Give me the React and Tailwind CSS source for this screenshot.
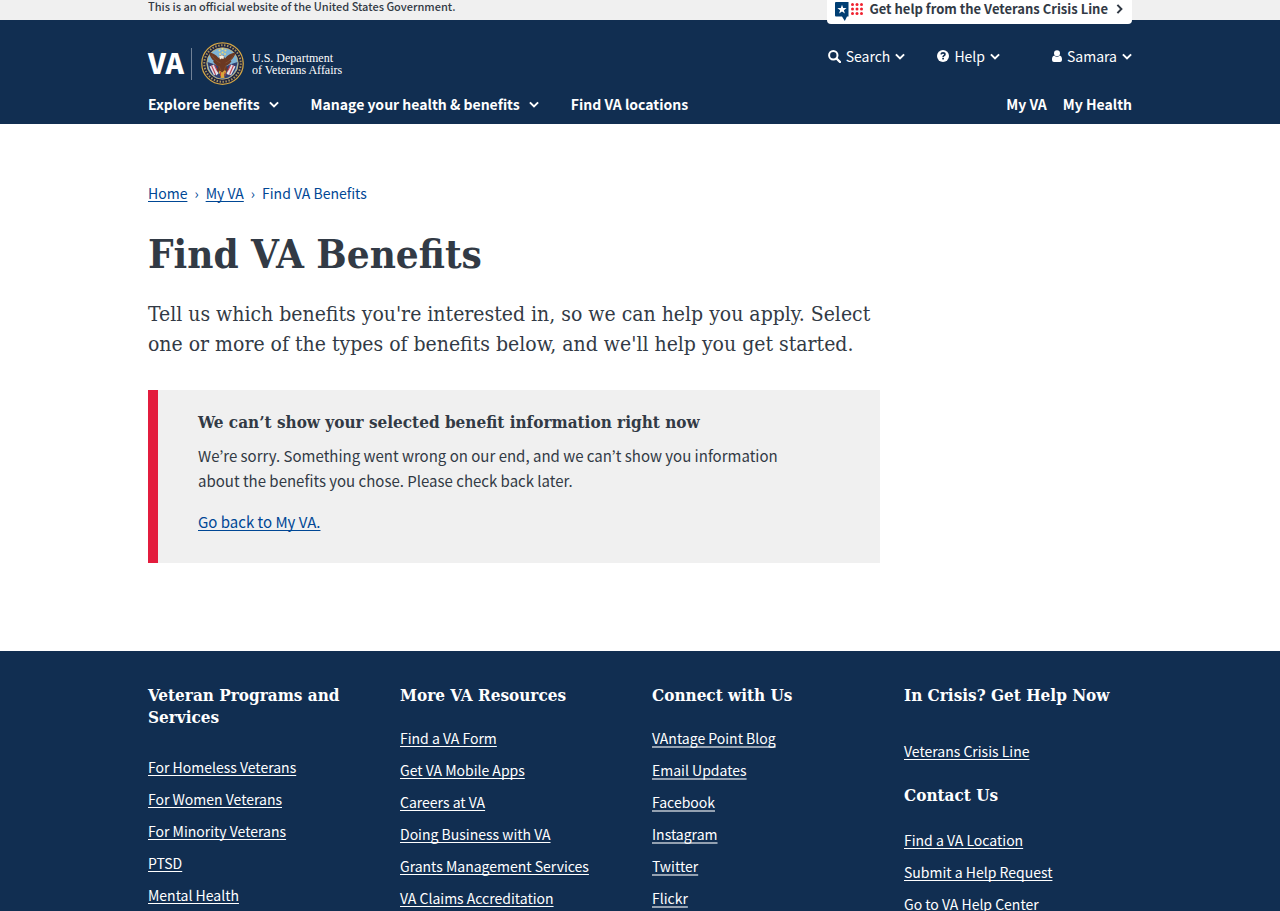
import React from 'react';

const sans = "font-['Noto_Sans_CJK_KR','Open_Sans',sans-serif]";
const slab = "font-['DejaVu_Serif_Condensed','DejaVu_Serif',serif]";

function Chevron({ className = '' }) {
  return (
    <svg className={`h-2.5 w-2.5 ${className}`} viewBox="0 0 10 10" fill="none" stroke="currentColor" strokeWidth="2" aria-hidden="true">
      <path d="M0.9 3.4 5 7.4 9.1 3.4" />
    </svg>
  );
}

function SearchIcon() {
  return (
    <svg className="h-[13px] w-[13px]" viewBox="0 0 13 13" fill="none" stroke="currentColor" aria-hidden="true">
      <circle cx="5.3" cy="5.3" r="4.2" strokeWidth="2" />
      <path d="M8.5 8.5 12 12" strokeWidth="2.4" strokeLinecap="round" />
    </svg>
  );
}

function HelpIcon() {
  return (
    <svg className="h-3 w-3" viewBox="0 0 12 12" aria-hidden="true">
      <circle cx="6" cy="6" r="6" fill="currentColor" />
      <path d="M4.1 4.4C4.3 3.3 5 2.9 6 2.9c1.1 0 1.9.6 1.9 1.5C7.9 5.7 6.1 5.6 6.1 7" fill="none" stroke="#112e51" strokeWidth="1.7" />
      <rect x="5.2" y="7.8" width="1.8" height="1.6" fill="#112e51" />
    </svg>
  );
}

function UserIcon() {
  return (
    <svg className="h-3 w-2.5" viewBox="0 0 10 12" fill="currentColor" aria-hidden="true">
      <circle cx="5" cy="3.2" r="3" />
      <path d="M2.4 5.5C.7 5.7 0 7.3 0 9.5 0 11.2.8 12 2 12h6c1.2 0 2-.8 2-2.500 0-2.200-.7-3.800-2.400-4C6.9 6.300 6 6.800 5 6.800S3.100 6.300 2.400 5.500Z" />
    </svg>
  );
}

function CrisisIcon() {
  const dots = [17.5, 22, 26.5];
  const rows = [2.5, 7, 11.5];
  return (
    <svg className="h-[19px] w-7" viewBox="0 0 28 19" aria-hidden="true">
      <path d="M1 0h12.500v14.500H12L9.800 19 7 14.500H1Q0 14.500 0 13.500V1Q0 0 1 0Z" fill="#003e73" />
      <path d="m7 2.800 1.200 3.300h3.400L8.900 8.200l1 3.400L7 9.600l-2.900 2 1-3.400-2.700-2.100h3.400Z" fill="#fff" />
      {rows.map((y) => dots.map((x) => <circle key={`${x}-${y}`} cx={x} cy={y} r="1.5" fill="#f0212f" />))}
    </svg>
  );
}

function Seal() {
  return (
    <svg className="h-[43px] w-[43px]" viewBox="0 0 86 86" aria-hidden="true">
      <circle cx="43" cy="43" r="41.500" fill="#1c2242" stroke="#d5a845" strokeWidth="2.500" />
      <circle cx="43" cy="43" r="36.500" fill="none" stroke="#a3925e" strokeWidth="4" strokeDasharray="3 3" />
      <circle cx="43" cy="43" r="31.500" fill="#7fb4d6" stroke="#d8b25a" strokeWidth="1.500" />
      <path d="M13 40c3 22 14 33 30 33 16 0 27-11 30-33L58 45 43 52 28 45Z" fill="#34406f" />
      <path d="m17 49 9-4 8 16-8 6M69 49l-9-4-8 16 8 6" fill="#e3dde6" />
      <path d="m21 47 8 18M27 46l7 15M65 47l-8 18M59 46l-7 15" stroke="#bd4050" strokeWidth="2.200" />
      <g fill="#f0d774">
        <circle cx="43" cy="14" r="2" /><circle cx="37" cy="17" r="2" /><circle cx="49" cy="17" r="2" />
        <circle cx="43" cy="21" r="2" /><circle cx="38" cy="24" r="1.800" /><circle cx="48" cy="24" r="1.800" />
      </g>
      <path d="M16 21c2 8 5 13 10 17l-2 1c3 5 7 8 11 10l-4 8 8 2 4 5 4-5 7-3-4-8c5-2 9-6 11-10l-2-1c5-4 9-9 10-16-9 1-17 5-21 12l-3-6-6-1-4 6c-5-7-11-10-19-11Z" fill="#6b3822" />
      <path d="M22 27c5 8 10 12 17 15M65 27c-5 8-9 12-16 15M36 48l4 9M50 47l-4 10" stroke="#80492c" strokeWidth="1.800" fill="none" />
      <path d="M36 29q6-5 10 0l-1 5-4-1-3 2Z" fill="#f5efe0" />
      <path d="m37 57 5 4 6-5 3 5-5 4 1 7h-8l1-7-5-3Z" fill="#d9a63a" />
      <path d="m30 56 5 7-5 4M55 56l-4 8 6 2" fill="#dfe5ee" />
      <path d="M39 60v8M48 60v8" stroke="#c44734" strokeWidth="2" />
    </svg>
  );
}

function UtilityButton({ icon, children }) {
  return (
    <button type="button" className="flex items-center gap-[5px] leading-6">
      {icon}
      <span>{children}</span>
      <Chevron />
    </button>
  );
}

function FooterLinks({ items, soft, className = '' }) {
  return (
    <ul className={`flex flex-col gap-2 text-sm leading-6 ${className}`}>
      {items.map((item) => (
        <li key={item}>
          <a
            href="#"
            className={`underline underline-offset-2 [text-decoration-skip-ink:none] ${soft ? 'decoration-white/55 decoration-2' : 'decoration-1'}`}
          >
            {item}
          </a>
        </li>
      ))}
    </ul>
  );
}

function FooterHeading({ children }) {
  return <h2 className={`${slab} text-[17px] leading-[22px] font-bold`}>{children}</h2>;
}

export default function App() {
  const link = 'underline decoration-1 underline-offset-2 [text-decoration-skip-ink:none]';
  return (
    <div className={`${sans} flex min-h-screen flex-col bg-white text-[#323a45]`}>
      <div className="h-5 bg-[#f0f0f0]">
        <div className="mx-auto flex max-w-[1016px] items-start justify-between px-4">
          <p className="text-[11px] leading-3 font-medium">This is an official website of the United States Government.</p>
          <button type="button" className="relative z-10 flex h-6 items-start gap-1.5 rounded-b bg-white px-2 text-[13px] leading-[18px] font-bold">
            <span className="pt-0.5"><CrisisIcon /></span>
            <span>Get help from the Veterans Crisis Line</span>
            <span className="pt-1"><Chevron className="-rotate-90" /></span>
          </button>
        </div>
      </div>

      <header className="bg-[#112e51] text-white">
        <div className="mx-auto flex max-w-[1016px] flex-col px-4 pt-[22px] pb-2">
          <div className="flex items-start justify-between">
            <a href="#" className="flex items-center" aria-label="VA, U.S. Department of Veterans Affairs">
              <span className="w-[35px] pb-1 text-[28px] leading-7 font-black">VA</span>
              <span className="mr-[9px] ml-2 h-8 w-px bg-white/40" />
              <Seal />
              <span className="ml-2 font-['Liberation_Serif',serif] text-xs leading-3 whitespace-nowrap">
                U.S. Department<br />of Veterans Affairs
              </span>
            </a>
            <div className="flex items-center gap-8 pt-0.5 text-sm">
              <UtilityButton icon={<SearchIcon />}>Search</UtilityButton>
              <UtilityButton icon={<HelpIcon />}>Help</UtilityButton>
              <span className="ml-5"><UtilityButton icon={<UserIcon />}>Samara</UtilityButton></span>
            </div>
          </div>
          <nav className="mt-[7px] flex items-center text-sm leading-6 font-bold">
            <div className="flex items-center gap-8">
              <button type="button" className="flex items-center gap-[9px]">Explore benefits<Chevron /></button>
              <button type="button" className="flex items-center gap-[9px]">Manage your health &amp; benefits<Chevron /></button>
              <a href="#">Find VA locations</a>
            </div>
            <div className="ml-auto flex gap-4">
              <a href="#">My VA</a>
              <a href="#">My Health</a>
            </div>
          </nav>
        </div>
      </header>

      <main className="mx-auto w-full max-w-[1016px] px-4 pt-[57px] pb-[88px]">
        <nav aria-label="Breadcrumb" className="text-sm leading-6 text-[#004795]">
          <ol className="flex gap-[7px]">
            <li><a href="#" className={link}>Home</a></li>
            <li aria-hidden="true">›</li>
            <li><a href="#" className={link}>My VA</a></li>
            <li aria-hidden="true">›</li>
            <li aria-current="page">Find VA Benefits</li>
          </ol>
        </nav>
        <div className="max-w-[732px]">
          <h1 className={`${slab} mt-[23px] text-[40px] leading-[52px] font-bold`}>Find VA Benefits</h1>
          <p className={`${slab} mt-[19px] text-[21px] leading-[30px]`}>
            Tell us which benefits you're interested in, so we can help you apply. Select
            one or more of the types of benefits below, and we'll help you get started.
          </p>
          <section className="mt-[31px] border-l-[10px] border-[#e31c3d] bg-[#f0f0f0] pt-5 pr-16 pb-[29px] pl-10">
            <h2 className={`${slab} text-[17px] leading-6 font-bold`}>We can’t show your selected benefit information right now</h2>
            <p className="mt-[9px] text-[15px] leading-[25px]">
              We’re sorry. Something went wrong on our end, and we can’t show you information
              about the benefits you chose. Please check back later.
            </p>
            <p className="mt-4 text-[15px] leading-[25px]"><a href="#" className={`${link} text-[#004795]`}>Go back to My VA.</a></p>
          </section>
        </div>
      </main>

      <footer className="grow bg-[#112e51] text-white">
        <div className="mx-auto grid max-w-[1016px] grid-cols-4 gap-6 px-4 pt-[33px]">
          <div>
            <FooterHeading>Veteran Programs and Services</FooterHeading>
            <FooterLinks className="mt-[27px]" items={['For Homeless Veterans', 'For Women Veterans', 'For Minority Veterans', 'PTSD', 'Mental Health']} />
          </div>
          <div>
            <FooterHeading>More VA Resources</FooterHeading>
            <FooterLinks className="mt-5" items={['Find a VA Form', 'Get VA Mobile Apps', 'Careers at VA', 'Doing Business with VA', 'Grants Management Services', 'VA Claims Accreditation']} />
          </div>
          <div>
            <FooterHeading>Connect with Us</FooterHeading>
            <FooterLinks soft className="mt-5" items={['VAntage Point Blog', 'Email Updates', 'Facebook', 'Instagram', 'Twitter', 'Flickr']} />
          </div>
          <div>
            <FooterHeading>In Crisis? Get Help Now</FooterHeading>
            <FooterLinks className="mt-[33px] mb-[21px]" items={['Veterans Crisis Line']} />
            <FooterHeading>Contact Us</FooterHeading>
            <FooterLinks className="mt-[22px]" items={['Find a VA Location', 'Submit a Help Request', 'Go to VA Help Center']} />
          </div>
        </div>
      </footer>
    </div>
  );
}
